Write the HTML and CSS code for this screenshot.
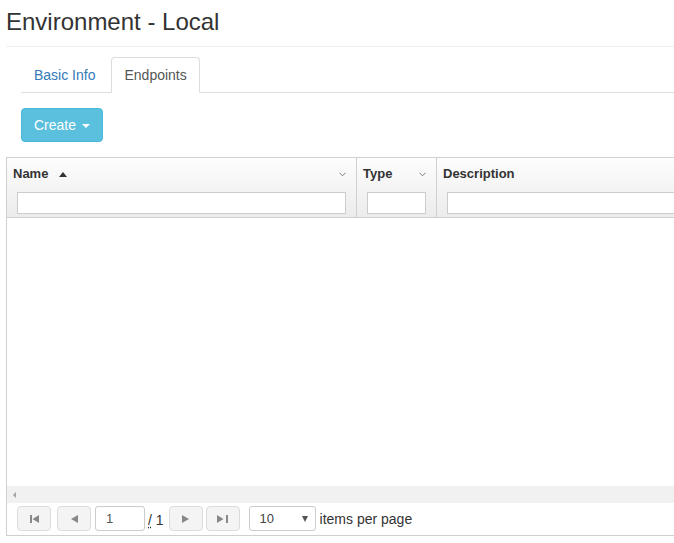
FILE: index.html
```html
<!DOCTYPE html>
<html>
<head>
<meta charset="utf-8">
<title>Environment - Local</title>
<link rel="stylesheet" href="styles.css">
</head>
<body>
<div class="page">
  <div class="page-header"><h1>Environment - Local</h1></div>

  <ul class="nav-tabs">
    <li><a>Basic Info</a></li>
    <li class="active"><a>Endpoints</a></li>
  </ul>

  <div class="toolbar">
    <button class="btn-info">Create <span class="caret"></span></button>
  </div>

  <div class="grid">
    <div class="grid-header">
      <div class="th th-name">
        <div class="th-title">
          <span class="th-label">Name<span class="sort-asc"></span></span>
          <svg class="chev" width="7" height="5" viewBox="0 0 7 5"><polyline points="0.5,0.8 3.5,3.8 6.5,0.8" fill="none" stroke="#777" stroke-width="1"/></svg>
        </div>
        <input class="filter" type="text">
      </div>
      <div class="th th-type">
        <div class="th-title">
          <span class="th-label">Type</span>
          <svg class="chev" width="7" height="5" viewBox="0 0 7 5"><polyline points="0.5,0.8 3.5,3.8 6.5,0.8" fill="none" stroke="#777" stroke-width="1"/></svg>
        </div>
        <input class="filter" type="text">
      </div>
      <div class="th th-desc">
        <div class="th-title">
          <span class="th-label">Description</span>
        </div>
        <input class="filter" type="text">
      </div>
    </div>

    <div class="grid-body"></div>

    <div class="hscroll"><span class="hscroll-arrow"></span></div>

    <div class="pager">
      <span class="pbtn pbtn-first">
        <svg width="9" height="8" viewBox="0 0 9 8"><rect x="0" y="0" width="2" height="8" fill="#888"/><polygon points="9,0 9,8 2.5,4" fill="#888"/></svg>
      </span>
      <span class="pbtn pbtn-prev">
        <svg width="7" height="8" viewBox="0 0 7 8"><polygon points="7,0 7,8 0,4" fill="#888"/></svg>
      </span>
      <span class="page-input">1</span>
      <span class="of"><span class="slash">/</span> 1</span>
      <span class="pbtn pbtn-next">
        <svg width="7" height="8" viewBox="0 0 7 8"><polygon points="0,0 0,8 7,4" fill="#888"/></svg>
      </span>
      <span class="pbtn pbtn-last">
        <svg width="11" height="8" viewBox="0 0 11 8"><polygon points="0,0 0,8 6.5,4" fill="#888"/><rect x="9" y="0" width="2" height="8" fill="#888"/></svg>
      </span>
      <span class="page-size">10<span class="dd-arrow"></span></span>
      <span class="pager-label">items per page</span>
    </div>
  </div>
</div>
</body>
</html>
```

FILE: styles.css
```css
html, body {
  margin: 0;
  padding: 0;
  overflow: hidden;
  background: #fff;
}

body {
  font-family: "Liberation Sans", Arial, Helvetica, sans-serif;
  font-size: 14px;
  line-height: 20px;
  color: #333;
}

.page {
  width: 1000px;
  padding-left: 6px;
}

.page-header {
  padding: 9px 0 11px 0;
  border-bottom: 1px solid #eee;
}

.page-header h1 {
  margin: 0;
  font-size: 24px;
  font-weight: normal;
  line-height: 26px;
  color: #333;
}

.nav-tabs {
  display: flex;
  list-style: none;
  margin: 10px 0 0 15px;
  padding: 0;
  border-bottom: 1px solid #ddd;
}

.nav-tabs li {
  margin-bottom: -1px;
}

.nav-tabs a {
  display: block;
  padding: 7px 12px;
  margin-right: 3px;
  line-height: 20px;
  border: 1px solid transparent;
  border-radius: 4px 4px 0 0;
  color: #337ab7;
}

.nav-tabs li.active a {
  color: #555;
  background: #fff;
  border-color: #ddd #ddd transparent;
}

.toolbar {
  margin: 15px 0 15px 15px;
}

.btn-info {
  font-family: inherit;
  font-size: 14px;
  line-height: 20px;
  padding: 6px 12px;
  color: #fff;
  background: #5bc0de;
  border: 1px solid #46b8da;
  border-radius: 4px;
  cursor: pointer;
}

.caret {
  display: inline-block;
  width: 0;
  height: 0;
  margin-left: 2px;
  vertical-align: middle;
  border-top: 4px solid #fff;
  border-left: 4px solid transparent;
  border-right: 4px solid transparent;
}

.grid {
  border: 1px solid #d0d0d0;
  border-right: 0;
}

.grid-header {
  display: flex;
  background: linear-gradient(to bottom, #fdfdfd 0%, #ececec 100%);
  border-bottom: 1px solid #cfcfcf;
}

.th {
  box-sizing: border-box;
  padding: 6px 0 3px 0;
}

.th-name {
  width: 349px;
}

.th-type {
  width: 80px;
  border-left: 1px solid #d0d0d0;
}

.th-desc {
  flex: 1;
  border-left: 1px solid #d0d0d0;
}

.th-title {
  display: flex;
  align-items: center;
  justify-content: space-between;
  height: 20px;
  padding: 0 10px 0 6px;
}

.th-label {
  font-size: 13px;
  font-weight: bold;
  color: #333;
  display: flex;
  align-items: center;
}

.sort-asc {
  display: inline-block;
  width: 0;
  height: 0;
  margin-left: 11px;
  border-bottom: 5px solid #333;
  border-left: 4px solid transparent;
  border-right: 4px solid transparent;
}

.chev {
  display: block;
}

.filter {
  display: block;
  box-sizing: border-box;
  width: calc(100% - 20px);
  height: 22px;
  margin: 8px 10px 0 10px;
  padding: 0 4px;
  border: 1px solid #ccc;
  background: #fff;
  font-family: inherit;
  font-size: 13px;
}

.grid-body {
  height: 268px;
  background: #fff;
}

.hscroll {
  height: 17px;
  background: #f1f1f1;
  display: flex;
  align-items: center;
  padding-left: 6px;
}

.hscroll-arrow {
  width: 0;
  height: 0;
  border-right: 3px solid #a3a3a3;
  border-top: 3px solid transparent;
  border-bottom: 3px solid transparent;
}

.pager {
  display: flex;
  align-items: center;
  height: 25px;
  padding: 3px 10px 4px 10px;
  background: #fff;
}

.pbtn {
  box-sizing: border-box;
  width: 34px;
  height: 25px;
  display: flex;
  align-items: center;
  justify-content: center;
  background: #f4f4f4;
  border: 1px solid #dcdcdc;
  border-radius: 4px;
}

.pbtn svg {
  display: block;
}

.pbtn-first { margin-right: 6px; }
.pbtn-prev { margin-right: 4px; }
.pbtn-next { margin-right: 3px; }
.pbtn-last { margin-right: 9px; }

.page-input {
  box-sizing: border-box;
  width: 50px;
  height: 25px;
  padding-left: 10px;
  border: 1px solid #ccc;
  border-radius: 3px;
  background: #fff;
  font-size: 13px;
  line-height: 23px;
  color: #555;
}

.of {
  margin: 2px 5px 0 3px;
  font-size: 14px;
  color: #333;
}

.slash {
  text-decoration: underline dotted;
  text-underline-offset: 2px;
}

.page-size {
  box-sizing: border-box;
  width: 67px;
  height: 25px;
  padding: 0 7px 0 10px;
  display: flex;
  align-items: center;
  justify-content: space-between;
  border: 1px solid #ccc;
  border-radius: 3px;
  background: #fff;
  font-size: 13px;
  color: #444;
}

.dd-arrow {
  width: 0;
  height: 0;
  border-top: 6px solid #555;
  border-left: 3px solid transparent;
  border-right: 3px solid transparent;
}

.pager-label {
  margin-left: 4px;
  font-size: 14px;
  color: #333;
}
```
